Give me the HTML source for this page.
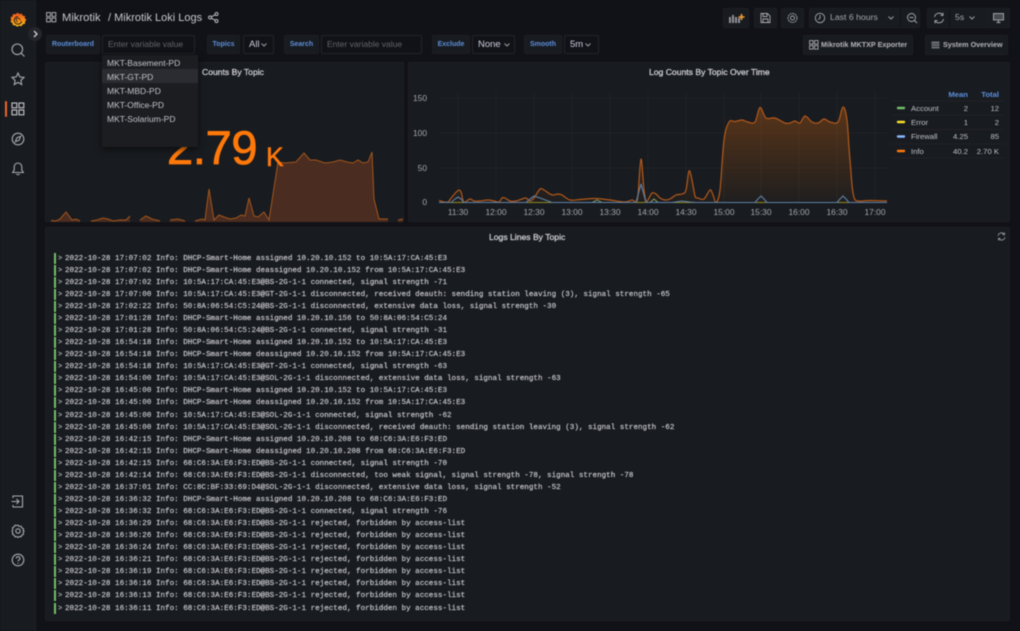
<!DOCTYPE html>
<html><head><meta charset="utf-8"><style>
html,body{margin:0;padding:0;background:#111217;}
#r{position:relative;width:1020px;height:631px;overflow:hidden;background:#111217;font-family:"Liberation Sans",sans-serif;color:#ccccdc;filter:blur(.55px);}
.a{position:absolute;white-space:nowrap;}
.p{position:absolute;background:#181b1f;border:1px solid #1c1e23;border-radius:2px;box-sizing:border-box;}
.lb{position:absolute;top:35px;height:19px;background:#181b1f;border:1px solid #1c1e23;box-sizing:border-box;color:#5c8fdc;font-size:7px;font-weight:bold;line-height:18px;text-align:center;border-radius:2px;}
.in{position:absolute;top:35px;height:19px;background:#111217;border:1px solid #20232a;box-sizing:border-box;font-size:8.5px;line-height:17px;color:#62656d;padding-left:5px;border-radius:2px;}
.sel{color:#ccccdc;font-size:9.5px;}
.btn{position:absolute;background:#181b1f;border:1px solid #1c1e23;box-sizing:border-box;border-radius:2px;}
.t{position:absolute;font-size:8.6px;color:#d0d1d8;-webkit-text-stroke:.25px #d0d1d8;text-align:center;white-space:nowrap;}
.log{position:absolute;left:65px;font:7.58px/12px "Liberation Mono",monospace;color:#c6c7ce;white-space:pre;-webkit-text-stroke:.18px #c6c7ce;}
.bar{position:absolute;left:54px;width:1.7px;height:11px;background:#73bf69;}
.ch{position:absolute;left:58px;font:bold 7px/12px "Liberation Mono",monospace;color:#a8aab2;}
.ax{font:8.4px "Liberation Sans",sans-serif;fill:#a5a7ae;}
.lg{position:absolute;font-size:7.7px;color:#bfc0c8;white-space:nowrap;}
.hd{position:absolute;font-size:7.7px;font-weight:bold;color:#5c8fdc;}
.dd{position:absolute;left:107px;font-size:8.5px;color:#c2c3cb;white-space:nowrap;line-height:14px;}
svg{position:absolute;overflow:visible;}
</style></head><body><div id="r">

<div class="a" style="left:0;top:0;width:36px;height:631px;background:#181b1f;border-right:1px solid #1e2024;box-sizing:border-box;"></div>

<svg style="left:10px;top:12px" width="16" height="16" viewBox="0 0 16 16">
<defs><linearGradient id="g" x1="0" y1="1" x2="0" y2="0"><stop offset="0" stop-color="#fcc012"/><stop offset="1" stop-color="#f0501e"/></linearGradient></defs>
<path fill="url(#g)" d="M8 .6l1.6 1.6 2.1-.8.9 2.2 2.3.3-.1 2.3 1.6 1.4-1.3 2-.1 2.2-2.2.5-1.3 1.9-2.1-.6-2 1.1L5.300 13.400l-2.300-.1-.6-2.200L.5 9.800l.8-2.100L.5 5.500l2-1.100.4-2.300 2.300.1z"/>
<path fill="none" stroke="#1c1b1f" stroke-width="1" d="M11.700 9.300A3.800 3.800 0 1 1 8 4.600"/><path fill="none" stroke="#1c1b1f" stroke-width=".8" d="M10 8.400a1.900 1.900 0 1 0-2 1.500"/>
</svg>

<div class="a" style="left:28px;top:27px;width:14px;height:14px;border-radius:50%;background:#24262b;"></div>
<svg style="left:28px;top:27px" width="14" height="14" fill="none" stroke="#d0d1d8" stroke-width="1.300"><path d="M6 4l3 3-3 3"/></svg>

<!-- sidebar icons -->
<svg style="left:10px;top:42px" width="16" height="16" fill="none" stroke="#a9abb2" stroke-width="1.100"><circle cx="7.300" cy="7.300" r="5.300"/><path d="M11 11l3.500 3.500"/></svg>
<svg style="left:10px;top:71px" width="16" height="16" fill="none" stroke="#a9abb2" stroke-width="1.100"><path d="M8 2l1.800 3.900 4.200.5-3.100 2.900.8 4.200L8 11.400l-3.700 2.100.8-4.200L2 6.400l4.200-.5z"/></svg>
<div class="a" style="left:5px;top:101px;width:2px;height:16px;background:#f0642d;border-radius:1px;"></div>
<svg style="left:11px;top:102px" width="14" height="14" fill="none" stroke="#c6c7ce" stroke-width="1.100"><rect x="1" y="1" width="4.800" height="4.800"/><rect x="8" y="1" width="4.800" height="4.800"/><rect x="1" y="8" width="4.800" height="4.800"/><rect x="8" y="8" width="4.800" height="4.800"/></svg>
<svg style="left:10px;top:131px" width="16" height="16" fill="none" stroke="#a9abb2" stroke-width="1.100"><circle cx="8" cy="8" r="5.800"/><path d="M10.600 5.300L9.200 9.200 5.400 10.700l1.400-3.900z"/></svg>
<svg style="left:10px;top:161px" width="16" height="16" fill="none" stroke="#a9abb2" stroke-width="1.100"><path d="M8 2a3.800 3.800 0 0 1 3.800 3.800V9l1.500 2.500H2.700L4.200 9V5.800A3.800 3.800 0 0 1 8 2zM6.300 13.500h3.400"/></svg>
<svg style="left:10px;top:493px" width="16" height="16" fill="none" stroke="#a9abb2" stroke-width="1.100"><path d="M3 5V3h9.500v11H3v-2M1.500 8.500h7M6.500 6l2.500 2.500L6.500 11"/></svg>
<svg style="left:10px;top:523px" width="16" height="16" fill="none" stroke="#a9abb2" stroke-width="1.100"><path d="M8 2.200l1.300 1.300 1.800-.3.700 1.700 1.700.7-.3 1.800L14 8l-.8 1.600.3 1.800-1.700.7-.7 1.700-1.800-.3L8 14.600l-1.300-1.100-1.800.3-.7-1.700-1.700-.7.3-1.800L2 8l.8-1.600-.3-1.800 1.700-.7.7-1.700 1.800.3z" stroke-linejoin="round"/><circle cx="8" cy="8" r="2.200"/></svg>
<svg style="left:10px;top:552px" width="16" height="16" fill="none" stroke="#a9abb2" stroke-width="1.100"><circle cx="8" cy="8" r="5.800"/><path d="M6.300 6.500a1.800 1.800 0 1 1 2.500 1.600c-.6.300-.8.600-.8 1.300M8 10.800v.9"/></svg>

<!-- header -->
<svg style="left:46px;top:12px" width="11" height="11" fill="none" stroke="#b8b9c0" stroke-width=".9"><rect x=".6" y=".6" width="3.800" height="3.800"/><rect x="6" y=".6" width="3.800" height="3.800"/><rect x=".6" y="6" width="3.800" height="3.800"/><rect x="6" y="6" width="3.800" height="3.800"/></svg>
<div class="a" style="left:62px;top:11px;font-size:11.200px;line-height:14px;color:#c7c8cf;">Mikrotik</div>
<div class="a" style="left:108px;top:11px;font-size:11px;line-height:14px;color:#c7c8cf;">/ Mikrotik Loki Logs</div>
<svg style="left:208px;top:12px" width="11" height="11" fill="none" stroke="#c0c1c8" stroke-width=".9"><circle cx="8.500" cy="2" r="1.500"/><circle cx="2" cy="5.500" r="1.500"/><circle cx="8.500" cy="9" r="1.500"/><path d="M3.400 4.800l3.800-2.100M3.400 6.200l3.800 2.100"/></svg>

<!-- top buttons -->
<div class="btn" style="left:723px;top:8px;width:26px;height:20px;"></div>
<svg style="left:728px;top:12px" width="17" height="12"><g fill="#8f9198"><rect x="1" y="5" width="2" height="6"/><rect x="4" y="3" width="2" height="8"/><rect x="7" y="5" width="2" height="6"/><rect x="10" y="6" width="2" height="5"/></g><path d="M13.500 2v6M10.500 5h6" stroke="#f5a12f" stroke-width="1.600"/></svg>
<div class="btn" style="left:754px;top:8px;width:23px;height:20px;"></div>
<svg style="left:759px;top:12px" width="13" height="12" fill="none" stroke="#a9abb2" stroke-width=".9"><path d="M2 1.500h6.500l2.500 2.500v6.500H2zM4 1.500v3h4v-3M4 10.500v-3.500h5v3.500"/></svg>
<div class="btn" style="left:781px;top:8px;width:23px;height:20px;"></div>
<svg style="left:786px;top:12px" width="13" height="12" fill="none" stroke="#a9abb2" stroke-width=".9"><circle cx="6.500" cy="6" r="4.500" stroke-dasharray="2 .6"/><circle cx="6.500" cy="6" r="2"/></svg>
<div class="btn" style="left:809px;top:8px;width:111px;height:20px;"></div>
<svg style="left:814px;top:12px" width="12" height="12" fill="none" stroke="#a9abb2" stroke-width=".9"><circle cx="6" cy="6" r="4.700"/><path d="M6 3v3.300l-1.800 1.200"/></svg>
<div class="a" style="left:830px;top:11px;font-size:8.700px;line-height:13px;color:#a5a7ae;">Last 6 hours</div>
<svg style="left:887px;top:15px" width="8" height="6" fill="none" stroke="#9a9ca3"><path d="M1.500 1.500L4 4l2.500-2.500"/></svg>
<div class="a" style="left:900px;top:9px;width:1px;height:18px;background:#111217;"></div>
<svg style="left:906px;top:12px" width="12" height="12" fill="none" stroke="#a9abb2" stroke-width=".9"><circle cx="5.500" cy="5.500" r="4"/><path d="M8.500 8.500l2.500 2.500M3.500 5.500h4"/></svg>
<div class="btn" style="left:927px;top:8px;width:76px;height:20px;"></div>
<svg style="left:933px;top:12px" width="12" height="12" fill="none" stroke="#a9abb2" stroke-width=".9"><path d="M1.500 5A4.700 4.700 0 0 1 10 3.200M10.500 7A4.700 4.700 0 0 1 2 8.800M10 .8v2.600H7.400M2 11.200V8.600h2.600"/></svg>
<div class="a" style="left:949px;top:9px;width:1px;height:18px;background:#111217;"></div>
<div class="a" style="left:955px;top:11px;font-size:8.700px;line-height:13px;color:#a5a7ae;">5s</div>
<svg style="left:968px;top:15px" width="8" height="6" fill="none" stroke="#9a9ca3"><path d="M1.500 1.500L4 4l2.500-2.500"/></svg>
<div class="btn" style="left:987px;top:8px;width:23px;height:20px;"></div>
<svg style="left:992px;top:12px" width="13" height="12" fill="none" stroke="#a9abb2" stroke-width=".9"><rect x="1.500" y="1.500" width="10" height="6.500" fill="#8f9198" fill-opacity=".4"/><path d="M4.500 10.500h4M6.500 8v2.500"/></svg>

<!-- variables -->
<div class="lb" style="left:46px;width:54px;">Routerboard</div>
<div class="in" style="left:102px;width:93px;">Enter variable value</div>
<div class="lb" style="left:207px;width:33px;">Topics</div>
<div class="in sel" style="left:243px;width:31px;">All</div>
<svg style="left:260px;top:42px" width="8" height="6" fill="none" stroke="#9a9ca3"><path d="M1.500 1.500L4 4l2.500-2.500"/></svg>
<div class="lb" style="left:284px;width:35px;">Search</div>
<div class="in" style="left:321px;width:101px;">Enter variable value</div>
<div class="lb" style="left:432px;width:38px;">Exclude</div>
<div class="in sel" style="left:472px;width:43px;">None</div>
<svg style="left:503px;top:42px" width="8" height="6" fill="none" stroke="#9a9ca3"><path d="M1.500 1.500L4 4l2.500-2.500"/></svg>
<div class="lb" style="left:524px;width:38px;">Smooth</div>
<div class="in sel" style="left:564px;width:35px;">5m</div>
<svg style="left:584px;top:42px" width="8" height="6" fill="none" stroke="#9a9ca3"><path d="M1.500 1.500L4 4l2.500-2.500"/></svg>

<div class="btn" style="left:803px;top:35px;width:110px;height:20px;"></div>
<svg style="left:809px;top:40px" width="10" height="10" fill="none" stroke="#a9abb2" stroke-width=".9"><rect x=".6" y=".6" width="3.500" height="3.500"/><rect x="5.600" y=".6" width="3.500" height="3.500"/><rect x=".6" y="5.600" width="3.500" height="3.500"/><rect x="5.600" y="5.600" width="3.500" height="3.500"/></svg>
<div class="a" style="left:821px;top:38px;font-size:7.200px;font-weight:bold;line-height:13px;color:#b4b5bc;">Mikrotik MKTXP Exporter</div>
<div class="btn" style="left:925px;top:35px;width:83px;height:20px;"></div>
<svg style="left:931px;top:41px" width="10" height="8"><rect x=".5" y=".5" width="8" height="7" fill="#6e7077"/><path d="M.5 3h8M.5 5.300h8" stroke="#181b1f" stroke-width=".6"/></svg>
<div class="a" style="left:943px;top:38px;font-size:7.200px;font-weight:bold;line-height:13px;color:#b4b5bc;">System Overview</div>

<!-- left panel -->
<div class="p" style="left:45px;top:62px;width:359px;height:160px;"></div>
<div class="t" style="left:202px;top:67px;">Counts By Topic</div>
<svg style="left:0;top:0" width="1020" height="631">
<g fill="#4a2c20" stroke="none">
<path d="M51 222V220.500L56 221 60 219 66 212 72 220 76 219 80 221V222Z"/>
<path d="M91 222V221L97 220 103 218 108 219 113 221 120 220 126 220 130 216V222Z"/>
<path d="M140 222V220L146 216 152 219 160 221V222Z"/><path d="M170 222V220L178 219 185 221V222Z"/>
<path d="M195 222V221L202 219 205 220 209 189 214 220 219 215 224 217 230 219 236 218 241 215 245 216 249 198 254 216 258 217 264 212 269 220 278 162 285 163 296 162 304 153 310 160 316 160 325 163 333 162 340 160 347 162 353 163 358 160 363 163 368 162 372 152 374 199 379 219 388 219V222Z"/>
<path d="M398 222V220L403 219V222Z"/></g>
<g fill="none" stroke="#a3561c" stroke-width="1">
<path d="M51 220.500L56 221 60 219 66 212 72 220 76 219 80 221"/>
<path d="M91 221L97 220 103 218 108 219 113 221 120 220 126 220 130 216"/>
<path d="M140 220L146 216 152 219 160 221"/><path d="M170 220L178 219 185 221"/>
<path d="M195 221L202 219 205 220 209 189 214 220 219 215 224 217 230 219 236 218 241 215 245 216 249 198 254 216 258 217 264 212 269 220 278 162 285 163 296 162 304 153 310 160 316 160 325 163 333 162 340 160 347 162 353 163 358 160 363 163 368 162 372 152 374 199 379 219 388 219"/>
<path d="M398 220L403 219"/></g>
</svg>
<div class="a" style="left:167px;top:120px;font-size:47px;line-height:56px;color:#ff780a;-webkit-text-stroke:.8px #ff780a;letter-spacing:-.3px;">2.79</div>
<div class="a" style="left:266px;top:141px;font-size:26.500px;line-height:32px;color:#ff780a;-webkit-text-stroke:.5px #ff780a;">K</div>

<!-- dropdown -->
<div class="a" style="left:102px;top:55px;width:96px;height:92px;background:#1b1d21;box-shadow:0 2px 6px rgba(0,0,0,.6);"></div>
<div class="a" style="left:102px;top:69px;width:96px;height:14px;background:#2a2c31;"></div>
<div class="dd" style="top:56px;">MKT-Basement-PD</div>
<div class="dd" style="top:70px;">MKT-GT-PD</div>
<div class="dd" style="top:84px;">MKT-MBD-PD</div>
<div class="dd" style="top:98px;">MKT-Office-PD</div>
<div class="dd" style="top:112px;">MKT-Solarium-PD</div>

<!-- right panel -->
<div class="p" style="left:408px;top:62px;width:602px;height:160px;"></div>
<div class="t" style="left:649px;top:67px;">Log Counts By Topic Over Time</div>
<svg style="left:0;top:0" width="1020" height="631">
<g stroke="#232529" stroke-width=".7"><path d="M439 98H887M439 133H887M439 168H887M439 202.500H887"/>
<path d="M458 92V203M496 92V203M534 92V203M572 92V203M610 92V203M648 92V203M686 92V203M724 92V203M761 92V203M799 92V203M837 92V203M875 92V203"/></g>
<defs><linearGradient id="o" x1="0" y1="0" x2="0" y2="1"><stop offset="0" stop-color="#ff780a" stop-opacity=".28"/><stop offset="1" stop-color="#ff780a" stop-opacity=".03"/></linearGradient></defs>
<path class="sm" data-close="1" fill="url(#o)" d="M439 200.500L444 202 448 202 452 197 458 190.500 461 192 464 202.500 470 199 474 201 480 201 488 200 494 201 499 202 502 198 505 198 510 201 516 201 522 199 526 198 530 201 534 198 540 189 544 190 550 194 553 195 558 194 562 195 570 200 580 199.500 595 198.500 610 200 625 202 632 200 636 202 638 195 641 159 644 190 646 201 648 200 652 193 656 194 660 198 665 200 670 199 676 195 682 194 686 190 689 171 692 180 695 196 698 198 704 199 710 190 713 195 716 202.500 720 190 724 140 729 122 735 121.500 742 120 748 122 755 122 760 107.500 766 118 775 118 785 123 790 123 795 121 800 123 805 116 812 122 818 123 824 119 830 122 838 122 843 107 847 120 850 160 855 200 870 200.500 887 201"/>
<path class="sm" fill="none" stroke="#b4591b" stroke-width="1.200" stroke-linejoin="round" d="M439 200.500L444 202 448 202 452 197 458 190.500 461 192 464 202.500 470 199 474 201 480 201 488 200 494 201 499 202 502 198 505 198 510 201 516 201 522 199 526 198 530 201 534 198 540 189 544 190 550 194 553 195 558 194 562 195 570 200 580 199.500 595 198.500 610 200 625 202 632 200 636 202 638 195 641 159 644 190 646 201 648 200 652 193 656 194 660 198 665 200 670 199 676 195 682 194 686 190 689 171 692 180 695 196 698 198 704 199 710 190 713 195 716 202.500 720 190 724 140 729 122 735 121.500 742 120 748 122 755 122 760 107.500 766 118 775 118 785 123 790 123 795 121 800 123 805 116 812 122 818 123 824 119 830 122 838 122 843 107 847 120 850 160 855 200 870 200.500 887 201"/>
<path fill="none" stroke="#8f8a24" stroke-width=".9" d="M439 202.500H887"/>
<path fill="none" stroke="#8aa86a" stroke-width=".9" d="M592 202.500L597 200 602 202.500M650 202.500L654 199 658 202.500"/>
<path fill="none" stroke="#5d82ac" stroke-width="1.100" stroke-linejoin="round" d="M439 202.500H451L455 199 458 197 461 199 464 202.500H526L530 199 534 196 540 198 552 202.500H636L638 195 641 184 644 195 646 202.500H672L682 201 690 202 696 202.500H755L758 199 761 196 764 199 767 202.500H837L840 199 843 196 846 199 849 202.500H887"/>
<g text-anchor="end" class="ax"><text x="427" y="101">150</text><text x="427" y="136">100</text><text x="427" y="171">50</text><text x="427" y="205">0</text></g>
<g text-anchor="middle" class="ax"><text x="458" y="215">11:30</text><text x="496" y="215">12:00</text><text x="534" y="215">12:30</text><text x="572" y="215">13:00</text><text x="610" y="215">13:30</text><text x="648" y="215">14:00</text><text x="686" y="215">14:30</text><text x="724" y="215">15:00</text><text x="761" y="215">15:30</text><text x="799" y="215">16:00</text><text x="837" y="215">16:30</text><text x="875" y="215">17:00</text></g>
<g stroke="#24262b" stroke-width=".7"><path d="M892 101H1004M892 115H1004M892 129.500H1004M892 144H1004M892 158H1004"/></g>
<g stroke-width="2.400" stroke-linecap="round"><path d="M898 108H904" stroke="#73bf69"/><path d="M898 122H904" stroke="#fade2a"/><path d="M898 136.500H904" stroke="#8ab8ff"/><path d="M898 151H904" stroke="#ff780a"/></g>
</svg>
<div class="hd" style="right:52px;top:90px;">Mean</div>
<div class="hd" style="right:21px;top:90px;">Total</div>
<div class="lg" style="left:911px;top:104px;">Account</div><div class="lg" style="right:52px;top:104px;">2</div><div class="lg" style="right:21px;top:104px;">12</div>
<div class="lg" style="left:911px;top:118px;">Error</div><div class="lg" style="right:52px;top:118px;">1</div><div class="lg" style="right:21px;top:118px;">2</div>
<div class="lg" style="left:911px;top:132px;">Firewall</div><div class="lg" style="right:52px;top:132px;">4.25</div><div class="lg" style="right:21px;top:132px;">85</div>
<div class="lg" style="left:911px;top:147px;">Info</div><div class="lg" style="right:52px;top:147px;">40.2</div><div class="lg" style="right:21px;top:147px;">2.70 K</div>

<!-- logs panel -->
<div class="p" style="left:45px;top:227px;width:965px;height:394px;"></div>
<div class="t" style="left:489px;top:232px;">Logs Lines By Topic</div>
<svg style="left:997px;top:232px" width="9" height="9" fill="none" stroke="#8b8d94" stroke-width="1"><path d="M1 3.800A3.600 3.600 0 0 1 7.400 2.400M8 5.200A3.600 3.600 0 0 1 1.600 6.600M7.500 .6v2H5.500M1.500 8.400v-2h2"/></svg>

<div id="L"><div class="bar" style="top:253px"></div><div class="ch" style="top:253px">&gt;</div><div class="log" style="top:253px">2022-10-28 17:07:02 Info: DHCP-Smart-Home assigned 10.20.10.152 to 10:5A:17:CA:45:E3</div>
<div class="bar" style="top:265px"></div><div class="ch" style="top:265px">&gt;</div><div class="log" style="top:265px">2022-10-28 17:07:02 Info: DHCP-Smart-Home deassigned 10.20.10.152 from 10:5A:17:CA:45:E3</div>
<div class="bar" style="top:277px"></div><div class="ch" style="top:277px">&gt;</div><div class="log" style="top:277px">2022-10-28 17:07:02 Info: 10:5A:17:CA:45:E3@BS-2G-1-1 connected, signal strength -71</div>
<div class="bar" style="top:289px"></div><div class="ch" style="top:289px">&gt;</div><div class="log" style="top:289px">2022-10-28 17:07:00 Info: 10:5A:17:CA:45:E3@GT-2G-1-1 disconnected, received deauth: sending station leaving (3), signal strength -65</div>
<div class="bar" style="top:301px"></div><div class="ch" style="top:301px">&gt;</div><div class="log" style="top:301px">2022-10-28 17:02:22 Info: 50:8A:06:54:C5:24@BS-2G-1-1 disconnected, extensive data loss, signal strength -30</div>
<div class="bar" style="top:313px"></div><div class="ch" style="top:313px">&gt;</div><div class="log" style="top:313px">2022-10-28 17:01:28 Info: DHCP-Smart-Home assigned 10.20.10.156 to 50:8A:06:54:C5:24</div>
<div class="bar" style="top:325px"></div><div class="ch" style="top:325px">&gt;</div><div class="log" style="top:325px">2022-10-28 17:01:28 Info: 50:8A:06:54:C5:24@BS-2G-1-1 connected, signal strength -31</div>
<div class="bar" style="top:337px"></div><div class="ch" style="top:337px">&gt;</div><div class="log" style="top:337px">2022-10-28 16:54:18 Info: DHCP-Smart-Home assigned 10.20.10.152 to 10:5A:17:CA:45:E3</div>
<div class="bar" style="top:349px"></div><div class="ch" style="top:349px">&gt;</div><div class="log" style="top:349px">2022-10-28 16:54:18 Info: DHCP-Smart-Home deassigned 10.20.10.152 from 10:5A:17:CA:45:E3</div>
<div class="bar" style="top:361px"></div><div class="ch" style="top:361px">&gt;</div><div class="log" style="top:361px">2022-10-28 16:54:18 Info: 10:5A:17:CA:45:E3@GT-2G-1-1 connected, signal strength -63</div>
<div class="bar" style="top:373px"></div><div class="ch" style="top:373px">&gt;</div><div class="log" style="top:373px">2022-10-28 16:54:00 Info: 10:5A:17:CA:45:E3@SOL-2G-1-1 disconnected, extensive data loss, signal strength -63</div>
<div class="bar" style="top:385px"></div><div class="ch" style="top:385px">&gt;</div><div class="log" style="top:385px">2022-10-28 16:45:00 Info: DHCP-Smart-Home assigned 10.20.10.152 to 10:5A:17:CA:45:E3</div>
<div class="bar" style="top:397px"></div><div class="ch" style="top:397px">&gt;</div><div class="log" style="top:397px">2022-10-28 16:45:00 Info: DHCP-Smart-Home deassigned 10.20.10.152 from 10:5A:17:CA:45:E3</div>
<div class="bar" style="top:410px"></div><div class="ch" style="top:410px">&gt;</div><div class="log" style="top:410px">2022-10-28 16:45:00 Info: 10:5A:17:CA:45:E3@SOL-2G-1-1 connected, signal strength -62</div>
<div class="bar" style="top:422px"></div><div class="ch" style="top:422px">&gt;</div><div class="log" style="top:422px">2022-10-28 16:45:00 Info: 10:5A:17:CA:45:E3@SOL-2G-1-1 disconnected, received deauth: sending station leaving (3), signal strength -62</div>
<div class="bar" style="top:434px"></div><div class="ch" style="top:434px">&gt;</div><div class="log" style="top:434px">2022-10-28 16:42:15 Info: DHCP-Smart-Home assigned 10.20.10.208 to 68:C6:3A:E6:F3:ED</div>
<div class="bar" style="top:446px"></div><div class="ch" style="top:446px">&gt;</div><div class="log" style="top:446px">2022-10-28 16:42:15 Info: DHCP-Smart-Home deassigned 10.20.10.208 from 68:C6:3A:E6:F3:ED</div>
<div class="bar" style="top:458px"></div><div class="ch" style="top:458px">&gt;</div><div class="log" style="top:458px">2022-10-28 16:42:15 Info: 68:C6:3A:E6:F3:ED@BS-2G-1-1 connected, signal strength -70</div>
<div class="bar" style="top:470px"></div><div class="ch" style="top:470px">&gt;</div><div class="log" style="top:470px">2022-10-28 16:42:14 Info: 68:C6:3A:E6:F3:ED@BS-2G-1-1 disconnected, too weak signal, signal strength -78, signal strength -78</div>
<div class="bar" style="top:482px"></div><div class="ch" style="top:482px">&gt;</div><div class="log" style="top:482px">2022-10-28 16:37:01 Info: CC:8C:BF:33:69:D4@SOL-2G-1-1 disconnected, extensive data loss, signal strength -52</div>
<div class="bar" style="top:494px"></div><div class="ch" style="top:494px">&gt;</div><div class="log" style="top:494px">2022-10-28 16:36:32 Info: DHCP-Smart-Home assigned 10.20.10.208 to 68:C6:3A:E6:F3:ED</div>
<div class="bar" style="top:506px"></div><div class="ch" style="top:506px">&gt;</div><div class="log" style="top:506px">2022-10-28 16:36:32 Info: 68:C6:3A:E6:F3:ED@BS-2G-1-1 connected, signal strength -76</div>
<div class="bar" style="top:518px"></div><div class="ch" style="top:518px">&gt;</div><div class="log" style="top:518px">2022-10-28 16:36:29 Info: 68:C6:3A:E6:F3:ED@BS-2G-1-1 rejected, forbidden by access-list</div>
<div class="bar" style="top:530px"></div><div class="ch" style="top:530px">&gt;</div><div class="log" style="top:530px">2022-10-28 16:36:26 Info: 68:C6:3A:E6:F3:ED@BS-2G-1-1 rejected, forbidden by access-list</div>
<div class="bar" style="top:542px"></div><div class="ch" style="top:542px">&gt;</div><div class="log" style="top:542px">2022-10-28 16:36:24 Info: 68:C6:3A:E6:F3:ED@BS-2G-1-1 rejected, forbidden by access-list</div>
<div class="bar" style="top:554px"></div><div class="ch" style="top:554px">&gt;</div><div class="log" style="top:554px">2022-10-28 16:36:21 Info: 68:C6:3A:E6:F3:ED@BS-2G-1-1 rejected, forbidden by access-list</div>
<div class="bar" style="top:566px"></div><div class="ch" style="top:566px">&gt;</div><div class="log" style="top:566px">2022-10-28 16:36:19 Info: 68:C6:3A:E6:F3:ED@BS-2G-1-1 rejected, forbidden by access-list</div>
<div class="bar" style="top:578px"></div><div class="ch" style="top:578px">&gt;</div><div class="log" style="top:578px">2022-10-28 16:36:16 Info: 68:C6:3A:E6:F3:ED@BS-2G-1-1 rejected, forbidden by access-list</div>
<div class="bar" style="top:590px"></div><div class="ch" style="top:590px">&gt;</div><div class="log" style="top:590px">2022-10-28 16:36:13 Info: 68:C6:3A:E6:F3:ED@BS-2G-1-1 rejected, forbidden by access-list</div>
<div class="bar" style="top:603px"></div><div class="ch" style="top:603px">&gt;</div><div class="log" style="top:603px">2022-10-28 16:36:11 Info: 68:C6:3A:E6:F3:ED@BS-2G-1-1 rejected, forbidden by access-list</div></div>

<script>
document.querySelectorAll('path.sm').forEach(function(e){
var n=e.getAttribute('d').match(/[\d.]+/g).map(Number),p=[];
for(var i=0;i<n.length;i+=2)p.push([n[i],n[i+1]]);
var d='M'+p[0][0]+' '+p[0][1];
for(i=0;i<p.length-1;i++){
var a=p[Math.max(i-1,0)],b=p[i],c=p[i+1],f=p[Math.min(i+2,p.length-1)];
var y1=Math.min(b[1]+(c[1]-a[1])/6,202.5),y2=Math.min(c[1]-(f[1]-b[1])/6,202.5);
var x1=Math.min(b[0]+(c[0]-a[0])/6,c[0]),x2=Math.max(c[0]-(f[0]-b[0])/6,b[0]);
d+='C'+x1+' '+y1+' '+x2+' '+y2+' '+c[0]+' '+c[1];
}
if(e.getAttribute('data-close'))d+='V202.5H'+p[0][0]+'Z';
e.setAttribute('d',d);
});
</script>
</div></body></html>
